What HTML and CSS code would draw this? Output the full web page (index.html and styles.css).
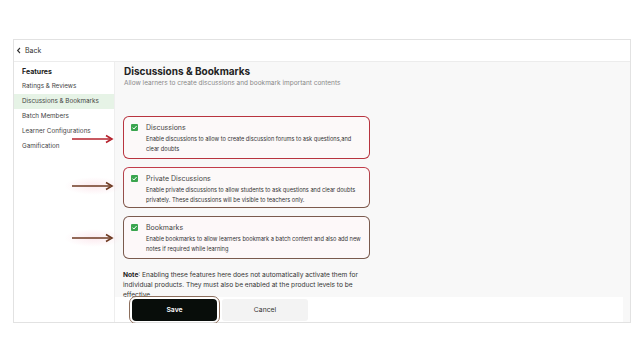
FILE: index.html
```html
<!DOCTYPE html>
<html>
<head>
<meta charset="utf-8">
<link rel="stylesheet" href="styles.css">
</head>
<body>
<div class="frame">
  <div class="topbar">
    <svg class="chev" width="6" height="7" viewBox="0 0 6 7"><path d="M4 1 L1.6 3.5 L4 6" fill="none" stroke="#333" stroke-width="1.1"/></svg>
    <span class="back">Back</span>
  </div>
  <div class="main">
    <aside class="sidebar">
      <div class="side-head">Features</div>
      <div class="side-item">Ratings &amp; Reviews</div>
      <div class="side-item active">Discussions &amp; Bookmarks</div>
      <div class="side-item">Batch Members</div>
      <div class="side-item">Learner Configurations</div>
      <div class="side-item">Gamification</div>
    </aside>
    <section class="content">
      <div class="scroll">
        <h1 class="title">Discussions &amp; Bookmarks</h1>
        <p class="subtitle">Allow learners to create discussions and bookmark important contents</p>
        <div class="cards">
          <div class="card c1">
            <div class="card-head"><span class="cb"><svg width="7" height="7" viewBox="0 0 7 7"><path d="M1.5 3.6 L2.9 5 L5.6 2" fill="none" stroke="#fff" stroke-width="1"/></svg></span><span class="card-title">Discussions</span></div>
            <p class="card-desc">Enable discussions to allow to create discussion forums to ask questions,and clear doubts</p>
          </div>
          <div class="card c2">
            <div class="card-head"><span class="cb"><svg width="7" height="7" viewBox="0 0 7 7"><path d="M1.5 3.6 L2.9 5 L5.6 2" fill="none" stroke="#fff" stroke-width="1"/></svg></span><span class="card-title">Private Discussions</span></div>
            <p class="card-desc">Enable private discussions to allow students to ask questions and clear doubts privately. These discussions will be visible to teachers only.</p>
          </div>
          <div class="card c3">
            <div class="card-head"><span class="cb"><svg width="7" height="7" viewBox="0 0 7 7"><path d="M1.5 3.6 L2.9 5 L5.6 2" fill="none" stroke="#fff" stroke-width="1"/></svg></span><span class="card-title">Bookmarks</span></div>
            <p class="card-desc">Enable bookmarks to allow learners bookmark a batch content and also add new notes if required while learning</p>
          </div>
        </div>
        <p class="note"><b>Note</b>: Enabling these features here does not automatically activate them for individual products. They must also be enabled at the product levels to be effective.</p>
      </div>
      <div class="footer">
        <button class="btn save">Save</button>
        <button class="btn cancel">Cancel</button>
      </div>
    </section>
  </div>
  <svg class="arrow a1" width="44" height="10" viewBox="0 0 44 10"><path d="M0 5 H38" stroke="#b5222c" stroke-width="1.6"/><path d="M34 1.5 L40 5 L34 8.5" fill="none" stroke="#b5222c" stroke-width="1.6"/></svg>
  <div class="glow g2"></div>
  <svg class="arrow a2" width="44" height="10" viewBox="0 0 44 10"><path d="M0 5 H38" stroke="#6e3a22" stroke-width="1.6"/><path d="M34 1.5 L40 5 L34 8.5" fill="none" stroke="#6e3a22" stroke-width="1.6"/></svg>
  <div class="glow g3"></div>
  <svg class="arrow a3" width="44" height="10" viewBox="0 0 44 10"><path d="M0 5 H38" stroke="#6e3a22" stroke-width="1.6"/><path d="M34 1.5 L40 5 L34 8.5" fill="none" stroke="#6e3a22" stroke-width="1.6"/></svg>
</div>
</body>
</html>
```
FILE: styles.css
```css
* { box-sizing: border-box; }
html, body { margin: 0; padding: 0; background: #fff; }
body { font-family: Inter, "Liberation Sans", sans-serif; color: #222; }

.frame {
  position: relative;
  margin: 39px 0 0 13px;
  width: 618px;
  height: 284px;
  border: 1px solid #e2e2e2;
  display: flex;
  flex-direction: column;
  background: #fff;
}
.topbar {
  height: 22px;
  display: flex;
  align-items: center;
  padding-left: 2px;
  gap: 3px;
  border-bottom: 1px solid #ececec;
}
.back { font-size: 7px; color: #333; }
.main { flex: 1; display: flex; min-height: 0; }

.sidebar {
  width: 101px;
  padding-top: 2px;
  background: #fff;
  border-right: 1px solid #eeeeee;
}
.side-head, .side-item {
  height: 15px;
  line-height: 15px;
  padding-left: 8px;
  font-size: 6.3px;
  color: #444;
  white-space: nowrap;
}
.side-head { font-weight: 700; font-size: 7px; color: #222; }
.side-item.active { background: #e6f3e6; }

.content {
  flex: 1;
  display: flex;
  flex-direction: column;
  background: #f8f8f8;
  min-width: 0;
}
.scroll {
  flex: 1;
  overflow: hidden;
  padding: 2px 0 0 9px;
  margin-right: 7px;
}
.title {
  margin: 0;
  font-size: 10px;
  line-height: 14px;
  font-weight: 700;
  color: #222;
}
.subtitle {
  margin: 0;
  font-size: 6.5px;
  line-height: 11px;
  color: #888;
}
.cards {
  margin-top: 27px;
  display: flex;
  flex-direction: column;
  gap: 8px;
  width: 247px;
  margin-left: -1px;
}
.card {
  border: 1px solid transparent;
  border-radius: 6px;
  padding: 5px 6px 6px 7px;
}
.c1 { background: linear-gradient(#fcf9f9, #fcf9f9) padding-box, linear-gradient(#b8343f, #b8343f) border-box; height: 43px; }
.c2 { background: linear-gradient(#fcf9f9, #fcf9f9) padding-box, linear-gradient(#c23c4a, #7c5a4c) border-box; height: 41px; }
.c3 { background: linear-gradient(#fdf8f9, #fdf8f9) padding-box, linear-gradient(#7a5a4e, #7a5a4e) border-box; height: 43px; }
.card-head { display: flex; align-items: center; gap: 8px; height: 10px; }
.cb {
  width: 7px; height: 7px;
  background: #3aa54f;
  border-radius: 1px;
  display: flex;
}
.card-title { font-size: 7px; color: #444; }
.card-desc {
  margin: 3px 0 0 15px;
  font-size: 5.65px;
  line-height: 9.5px;
  color: #333;
}
.note {
  margin: 12px 0 0 -1px;
  width: 245px;
  font-size: 6.6px;
  line-height: 9.8px;
  color: #333;
}
.note b { font-weight: 700; color: #222; }

.footer {
  height: 25px;
  background: #fff;
  margin-right: 7px;
  display: flex;
  align-items: center;
  padding-left: 17px;
  gap: 5px;
}
.btn {
  font-family: inherit;
  font-size: 6.8px;
  border: none;
  height: 22px;
  border-radius: 3px;
}
.save {
  width: 85px;
  background: #080d0a;
  color: #fff;
  font-weight: 600;
  outline: 1.3px solid #8c6e5c;
  outline-offset: 2px;
  border-radius: 4px;
}
.cancel {
  width: 86px;
  background: #f3f3f3;
  color: #333;
}

.arrow { position: absolute; left: 58px; }
.a1 { top: 94px; }
.a2 { top: 141px; }
.a3 { top: 193px; }
.glow {
  position: absolute;
  left: 50px;
  width: 60px;
  height: 18px;
  background: radial-gradient(ellipse at center, rgba(250,225,232,0.7), rgba(255,240,244,0) 70%);
}
.g2 { top: 137px; }
.g3 { top: 189px; }
```
